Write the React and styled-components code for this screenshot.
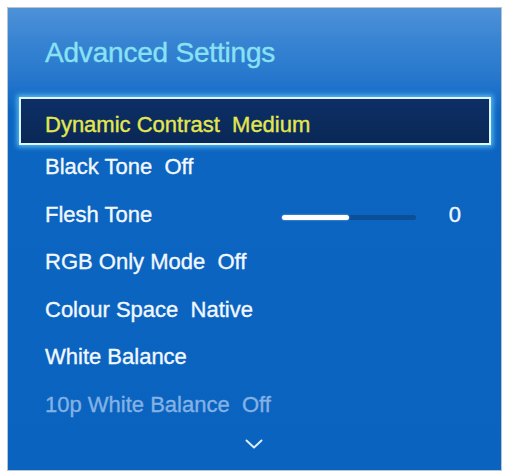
import React from 'react';
import styled, { createGlobalStyle } from 'styled-components';

const GlobalStyle = createGlobalStyle`
  html, body {
    margin: 0;
    padding: 0;
    background: #ffffff;
  }
  body {
    font-family: 'Liberation Sans', Arial, sans-serif;
  }
`;

const Page = styled.div`
  width: 507px;
  height: 473px;
  padding: 7px 5px 2px 7px;
  box-sizing: border-box;
`;

const Panel = styled.section`
  width: 495px;
  height: 464px;
  box-sizing: border-box;
  border: 1px solid #b7c3cf;
  background: linear-gradient(
    to bottom,
    #4e92d8 0px,
    #3a85d3 30px,
    #2677cc 70px,
    #1a6fc9 86px,
    #0c65c1 104px,
    #0b63c0 100%
  );
  display: flex;
  flex-direction: column;
`;

const Title = styled.h1`
  margin: 0;
  padding: 29px 0 0 37px;
  height: 89px;
  box-sizing: border-box;
  font-size: 28px;
  line-height: 32px;
  font-weight: 400;
  color: #88e2f4;
  letter-spacing: -0.2px;
  -webkit-text-stroke: 0.35px #88e2f4;
`;

const Focused = styled.div`
  margin: 0 10px 0 11px;
  height: 48px;
  box-sizing: border-box;
  border: 2px solid #dff6ff;
  background: linear-gradient(to bottom, #0d2f66, #0a2856);
  box-shadow: 0 0 5px 2px rgba(110, 215, 255, 0.75);
  padding: 7px 0 0 24px;
  font-size: 22px;
  line-height: 37px;
  color: #e4e84e;
  -webkit-text-stroke: 0.35px #e4e84e;
  white-space: pre;
`;

const List = styled.ul`
  list-style: none;
  margin: 0;
  padding: 0;
`;

const Row = styled.li`
  height: 47.5px;
  line-height: 44px;
  padding: 0 40px 0 37px;
  font-size: 22px;
  white-space: pre;
  color: ${p => (p.$disabled ? '#83b2e4' : '#f2f8ff')};
  -webkit-text-stroke: 0.35px ${p => (p.$disabled ? '#83b2e4' : '#f2f8ff')};
  display: flex;
  align-items: flex-start;
`;

const Label = styled.span`
  flex: 1;
`;

const Track = styled.div`
  width: 134px;
  height: 5px;
  margin-top: 22px;
  border-radius: 3px;
  background: #0a4f98;
`;

const Fill = styled.div`
  height: 100%;
  border-radius: 3px;
  background: #ffffff;
  box-shadow: 0 0 2px rgba(255, 255, 255, 0.6);
`;

const Value = styled.span`
  width: 45px;
  text-align: right;
`;

const More = styled.div`
  display: flex;
  justify-content: center;
  padding: 9px 0 0 0;
  margin-left: -2px;
`;

const items = [
  { label: 'Black Tone  Off' },
  { label: 'Flesh Tone', slider: 50, value: '0' },
  { label: 'RGB Only Mode  Off' },
  { label: 'Colour Space  Native' },
  { label: 'White Balance' },
  { label: '10p White Balance  Off', disabled: true },
];

export default function App() {
  return (
    <Page>
      <GlobalStyle />
      <Panel>
        <Title>Advanced Settings</Title>
        <Focused>{'Dynamic Contrast  Medium'}</Focused>
        <List>
          {items.map(item => (
            <Row key={item.label} $disabled={item.disabled}>
              <Label>{item.label}</Label>
              {item.slider != null && (
                <>
                  <Track>
                    <Fill style={{ width: `${item.slider}%` }} />
                  </Track>
                  <Value>{item.value}</Value>
                </>
              )}
            </Row>
          ))}
        </List>
        <More>
          <svg width="18" height="10" viewBox="0 0 18 10">
            <path d="M1.5 1.5 L9 8.5 L16.5 1.5" fill="none" stroke="#dcecff" strokeWidth="2" strokeLinecap="round" strokeLinejoin="round" />
          </svg>
        </More>
      </Panel>
    </Page>
  );
}
